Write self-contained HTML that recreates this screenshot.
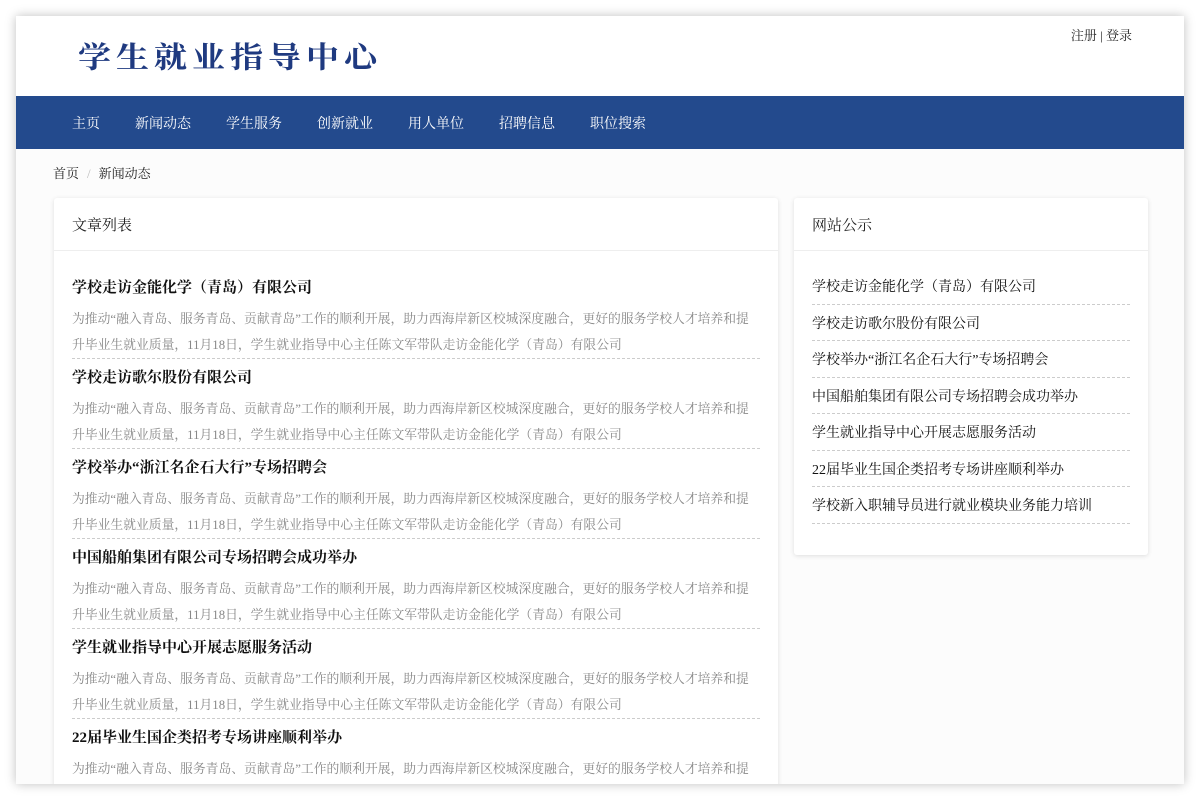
<!DOCTYPE html>
<html><head><meta charset="utf-8"><style>
*{margin:0;padding:0;box-sizing:border-box}
html,body{width:1200px;height:800px;overflow:hidden;background:#fff}
body{font-family:"Liberation Serif","Noto Serif CJK SC",serif;color:#222}
.page{position:absolute;left:16px;top:16px;width:1168px;height:768px;background:#fcfcfc;box-shadow:0 0 10px rgba(0,0,0,.25);overflow:hidden}
.head{height:80px;background:#fff;position:relative}
.logo{position:absolute;left:62px;top:16px;font-size:33px;color:#1f3a80;font-weight:bold;letter-spacing:5px;font-family:"Noto Serif CJK SC",serif;transform:scaleY(0.9)}
.login{position:absolute;right:52px;top:9px;font-size:13px;color:#222}
.nav{height:53px;background:#234a8d;display:flex;align-items:center;padding-left:56px}
.nav span{color:#fff;font-size:14px;margin-right:35px}
.crumb{position:absolute;left:37px;top:147px;font-size:13px;color:#222}
.crumb i{color:#bbb;font-style:normal;margin:0 8px}
.card{position:absolute;background:#fff;box-shadow:0 1px 5px rgba(0,0,0,.12);border-radius:3px}
.ch{height:53px;border-bottom:1px solid #eee;padding:16px 0 0 18px;font-size:15px;color:#222}
.l{left:38px;top:182px;width:724px;height:620px}
.r{left:778px;top:182px;width:354px;height:357px}
.item{margin:0 18px;height:90px;border-bottom:1px dashed #ccc;padding-top:8px}
.item b{display:block;height:22px;line-height:22px;font-size:15px;font-weight:bold;color:#111;white-space:nowrap;margin-bottom:7px}
.item p{font-size:12.8px;color:#888;line-height:26px;width:682px}
.list{margin:0 18px}
.list div{height:36.5px;border-bottom:1px dashed #ccc;font-size:14px;padding-top:8px;color:#111;white-space:nowrap}
</style></head><body>
<div class="page">
<div class="head"><div class="logo">学生就业指导中心</div><div class="login">注册 | 登录</div></div>
<div class="nav"><span>主页</span><span>新闻动态</span><span>学生服务</span><span>创新就业</span><span>用人单位</span><span>招聘信息</span><span>职位搜索</span></div>
<div class="crumb">首页<i>/</i>新闻动态</div>
<div class="card l"><div class="ch">文章列表</div>
<div style="height:18px"></div>
<div class="item"><b>学校走访金能化学（青岛）有限公司</b><p>为推动“融入青岛、服务青岛、贡献青岛”工作的顺利开展，助力西海岸新区校城深度融合，更好的服务学校人才培养和提升毕业生就业质量，11月18日，学生就业指导中心主任陈文军带队走访金能化学（青岛）有限公司</p></div>
<div class="item"><b>学校走访歌尔股份有限公司</b><p>为推动“融入青岛、服务青岛、贡献青岛”工作的顺利开展，助力西海岸新区校城深度融合，更好的服务学校人才培养和提升毕业生就业质量，11月18日，学生就业指导中心主任陈文军带队走访金能化学（青岛）有限公司</p></div>
<div class="item"><b>学校举办“浙江名企石大行”专场招聘会</b><p>为推动“融入青岛、服务青岛、贡献青岛”工作的顺利开展，助力西海岸新区校城深度融合，更好的服务学校人才培养和提升毕业生就业质量，11月18日，学生就业指导中心主任陈文军带队走访金能化学（青岛）有限公司</p></div>
<div class="item"><b>中国船舶集团有限公司专场招聘会成功举办</b><p>为推动“融入青岛、服务青岛、贡献青岛”工作的顺利开展，助力西海岸新区校城深度融合，更好的服务学校人才培养和提升毕业生就业质量，11月18日，学生就业指导中心主任陈文军带队走访金能化学（青岛）有限公司</p></div>
<div class="item"><b>学生就业指导中心开展志愿服务活动</b><p>为推动“融入青岛、服务青岛、贡献青岛”工作的顺利开展，助力西海岸新区校城深度融合，更好的服务学校人才培养和提升毕业生就业质量，11月18日，学生就业指导中心主任陈文军带队走访金能化学（青岛）有限公司</p></div>
<div class="item"><b>22届毕业生国企类招考专场讲座顺利举办</b><p>为推动“融入青岛、服务青岛、贡献青岛”工作的顺利开展，助力西海岸新区校城深度融合，更好的服务学校人才培养和提升毕业生就业质量，11月18日，学生就业指导中心主任陈文军带队走访金能化学（青岛）有限公司</p></div>
</div>
<div class="card r"><div class="ch">网站公示</div>
<div class="list" style="margin-top:17px">
<div>学校走访金能化学（青岛）有限公司</div>
<div>学校走访歌尔股份有限公司</div>
<div>学校举办“浙江名企石大行”专场招聘会</div>
<div>中国船舶集团有限公司专场招聘会成功举办</div>
<div>学生就业指导中心开展志愿服务活动</div>
<div>22届毕业生国企类招考专场讲座顺利举办</div>
<div>学校新入职辅导员进行就业模块业务能力培训</div>
</div></div>
</div>
</body></html>
